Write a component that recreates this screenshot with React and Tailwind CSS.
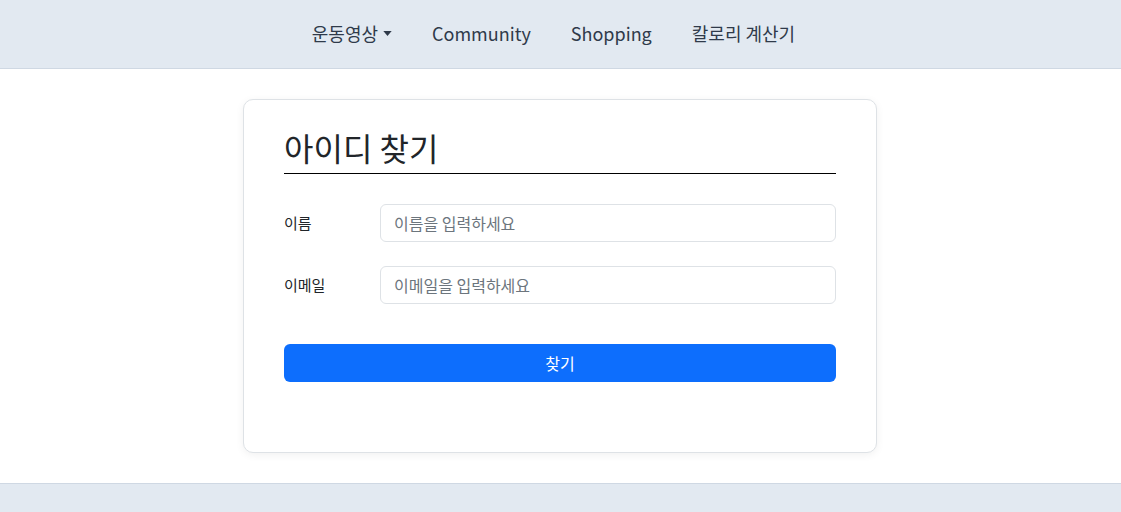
export default function App() {
    const font = { fontFamily: '"Noto Sans CJK KR", "Noto Sans", sans-serif' };

    return (
        <div className="min-h-screen bg-white text-[#212529]" style={font}>
            <header className="flex h-[69px] items-center justify-center gap-10 border-b border-[#cfd8e3] bg-[#e2e9f1] pr-[14px] pb-[2px] text-[18px] text-[#2f3a4a]">
                <button type="button" className="flex items-center gap-[5px]">
                    <span>운동영상</span>
                    <svg width="9" height="5" viewBox="0 0 10 6" className="mt-[1px]">
                        <path d="M0 0h10L5 6z" fill="#2f3a4a" />
                    </svg>
                </button>
                <a href="#">Community</a>
                <a href="#">Shopping</a>
                <a href="#">칼로리 계산기</a>
            </header>

            <main className="flex justify-center py-[30px] pr-px">
                <div className="w-[634px] rounded-[10px] border border-[#dee2e6] bg-white px-[40px] pt-[28px] pb-[70px] shadow-[0_2px_8px_rgba(0,0,0,0.06)]">
                    <h2 className="border-b border-black pb-[7px] text-[32px] leading-[1.2]">아이디 찾기</h2>

                    <div className="mt-[30px] flex flex-col gap-[24px]">
                        <div className="flex items-center">
                            <label className="w-[96px] text-[15px]">이름</label>
                            <input
                                type="text"
                                placeholder="이름을 입력하세요"
                                className="h-[38px] flex-1 rounded-[6px] border border-[#dee2e6] px-[13px] text-[16px] placeholder:text-[#6c757d] outline-none"
                            />
                        </div>
                        <div className="flex items-center">
                            <label className="w-[96px] text-[15px]">이메일</label>
                            <input
                                type="email"
                                placeholder="이메일을 입력하세요"
                                className="h-[38px] flex-1 rounded-[6px] border border-[#dee2e6] px-[13px] text-[16px] placeholder:text-[#6c757d] outline-none"
                            />
                        </div>
                    </div>

                    <button type="button" className="mt-[40px] h-[38px] w-full rounded-[6px] bg-[#0d6efd] text-[16px] text-white">
                        찾기
                    </button>
                </div>
            </main>

            <footer className="h-[29px] border-t border-[#cfd8e3] bg-[#e2e9f1]" />
        </div>
    );
}
